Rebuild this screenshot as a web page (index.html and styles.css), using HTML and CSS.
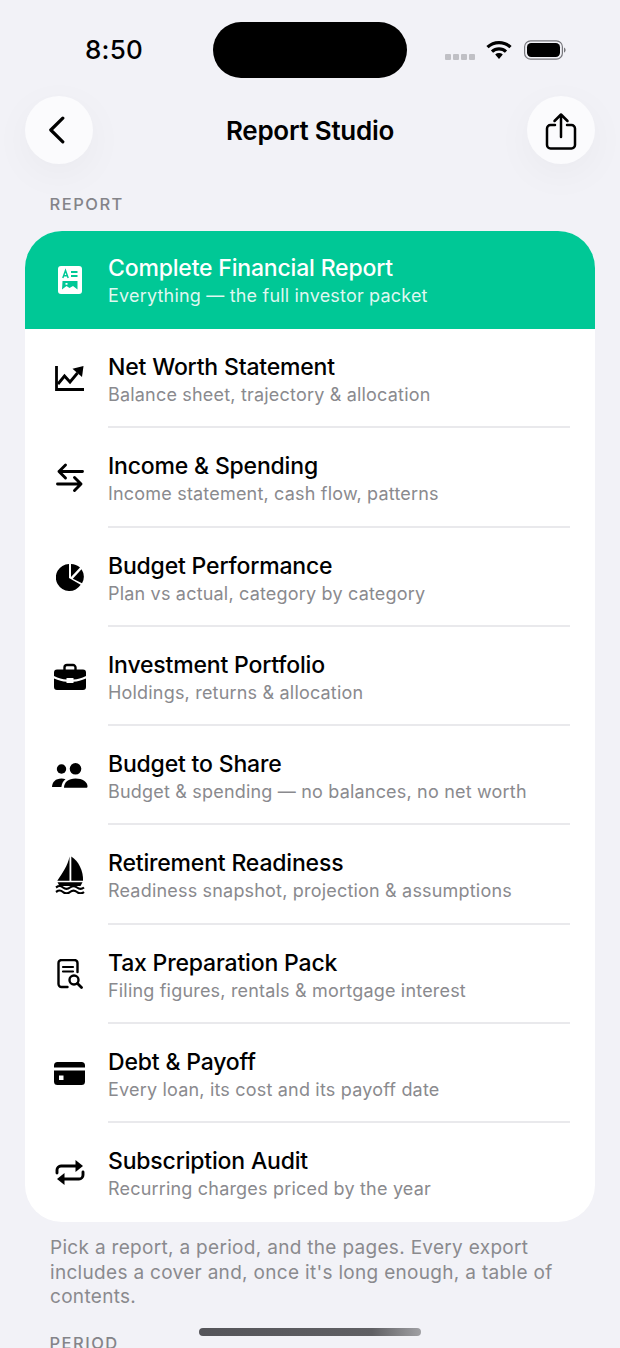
FILE: index.html
```html
<!DOCTYPE html>
<html lang="en">
<head>
<meta charset="utf-8">
<title>Report Studio</title>
<link rel="stylesheet" href="styles.css">
</head>
<body>
<div class="screen">
  <div class="island"></div>
  <div class="status">
    <span class="time">8:50</span>
    <div class="status-icons">
      <span class="signal"><i></i><i></i><i></i><i></i></span>
      <svg class="wifi" width="26" height="20" viewBox="0 0 26 20"><path d="M1.500 7.200A16.500 16.500 0 0 1 24.500 7.200" fill="none" stroke="#000" stroke-width="3.200"/><path d="M6 11.600A10.200 10.200 0 0 1 20 11.600" fill="none" stroke="#000" stroke-width="3.200"/><path d="M9.200 14.600a5.600 5.600 0 0 1 7.600 0L13 19z" fill="#000"/></svg>
      <svg class="battery" width="42" height="20" viewBox="0 0 42 20"><rect x="0.600" y="0.800" width="37.800" height="18.400" rx="6" fill="none" stroke="#77777c" stroke-width="1.200"/><rect x="3" y="3" width="33" height="14" rx="4.200" fill="#000"/><path d="M40 7.400c1 .4 1.600 1.400 1.600 2.600s-.6 2.200-1.600 2.600z" fill="#77777c"/></svg>
    </div>
  </div>
  <header class="nav">
    <button class="round-btn" aria-label="Back">
      <svg class="back-icon" width="17" height="28" viewBox="0 0 17 28"><path d="M14.800 2.200 2.800 14l12 11.800" fill="none" stroke="#000" stroke-width="3.200" stroke-linecap="round" stroke-linejoin="round"/></svg>
    </button>
    <h1 class="nav-title">Report Studio</h1>
    <button class="round-btn" aria-label="Share">
      <svg class="share-icon" width="32" height="40" viewBox="0 0 32 40"><path d="M10 13H5.500A3.500 3.500 0 0 0 2 16.500V33a3.500 3.500 0 0 0 3.500 3.500h21A3.500 3.500 0 0 0 30 33V16.500A3.500 3.500 0 0 0 26.500 13H22" fill="none" stroke="#000" stroke-width="2.500" stroke-linecap="round"/><path d="M16 25V3M9.500 9 16 2.500 22.500 9" fill="none" stroke="#000" stroke-width="2.500" stroke-linecap="round" stroke-linejoin="round"/></svg>
    </button>
  </header>

  <div class="section-label">REPORT</div>

  <section class="card">
    <div class="row row-hero">
      <div class="row-icon">
        <svg width="24" height="28" viewBox="0 0 24 28"><path fill="#fff" d="M3 0h18a3 3 0 0 1 3 3v22a3 3 0 0 1-3 3H3a3 3 0 0 1-3-3V3a3 3 0 0 1 3-3z"/><path d="M4.800 12 7.500 4.500 10.200 12M5.700 9.700h3.600" fill="none" stroke="#00c896" stroke-width="1.500"/><path d="M13 6h6.500M13 10h6.500" stroke="#00c896" stroke-width="1.800"/><path fill="#00c896" d="M4.500 15h15v8.500l-4.500-3.500-3.500 2-3-2-4.500 3.500zM7.500 17v1.800h2V17z"/></svg>
      </div>
      <div class="row-body">
        <div class="row-title">Complete Financial Report</div>
        <div class="row-sub">Everything — the full investor packet</div>
      </div>
    </div>

    <div class="row">
      <div class="row-icon">
        <svg width="30" height="25" viewBox="0 0 30 25"><path d="M1.500 0v23.500H29" fill="none" stroke="#000" stroke-width="2.800"/><path d="M3 18l6.500-8 5.500 6 7.500-9" fill="none" stroke="#000" stroke-width="2.800"/><path d="M17.500 2.800 28.500 0 27 11z" fill="#000"/></svg>
      </div>
      <div class="row-body">
        <div class="row-title">Net Worth Statement</div>
        <div class="row-sub">Balance sheet, trajectory &amp; allocation</div>
      </div>
    </div>

    <div class="row">
      <div class="row-icon">
        <svg width="28" height="31" viewBox="0 0 28 31"><path d="M3 9.500H26.500M9.500 3 3 9.500 9.500 16" fill="none" stroke="#000" stroke-width="2.900" stroke-linecap="round" stroke-linejoin="round"/><path d="M25 22H1.500M18.500 15.500 25 22l-6.500 6.500" fill="none" stroke="#000" stroke-width="2.900" stroke-linecap="round" stroke-linejoin="round"/></svg>
      </div>
      <div class="row-body">
        <div class="row-title">Income &amp; Spending</div>
        <div class="row-sub">Income statement, cash flow, patterns</div>
      </div>
    </div>

    <div class="row">
      <div class="row-icon">
        <svg width="28" height="28" viewBox="0 0 28 28"><path d="M13 1A13.500 13.500 0 1 0 24.700 21.800L13 15z" fill="#000"/><path d="M15 1v13L24 4.500A13.500 13.500 0 0 0 15 1z" fill="#000"/><path d="M16.800 15.800 25.500 6.300A13.500 13.500 0 0 1 26 20.300z" fill="#000"/></svg>
      </div>
      <div class="row-body">
        <div class="row-title">Budget Performance</div>
        <div class="row-sub">Plan vs actual, category by category</div>
      </div>
    </div>

    <div class="row">
      <div class="row-icon">
        <svg width="32" height="27" viewBox="0 0 32 27"><path d="M10.500 7V4.500A2.500 2.500 0 0 1 13 2h6a2.500 2.500 0 0 1 2.500 2.500V7" fill="none" stroke="#000" stroke-width="2.400"/><path d="M3 6.500h26a3 3 0 0 1 3 3V13c-4.500 2.300-8.500 3.200-12.500 3.500V15h-7v1.500C8.500 16.200 4.500 15.300 0 13V9.500a3 3 0 0 1 3-3z" fill="#000"/><path d="M0 15.500c4.500 2 8.500 3 12.500 3.300V20h7v-1.200c4-.3 8-1.300 12.500-3.300V24a3 3 0 0 1-3 3H3a3 3 0 0 1-3-3z" fill="#000"/></svg>
      </div>
      <div class="row-body">
        <div class="row-title">Investment Portfolio</div>
        <div class="row-sub">Holdings, returns &amp; allocation</div>
      </div>
    </div>

    <div class="row">
      <div class="row-icon">
        <svg width="36" height="25" viewBox="0 0 36 25"><circle cx="9.500" cy="6" r="4.700" fill="#000"/><circle cx="23.500" cy="5.800" r="5.800" fill="#000"/><path d="M0 24c.3-5 3.500-8.500 9.500-8.500 1.500 0 2.800.2 4 .7-2.400 1.800-3.700 4.600-4.100 7.800z" fill="#000"/><path d="M12 24.800c0-5.800 4.500-9.300 11.500-9.300S35.500 19 35.500 23.300c0 1-.5 1.500-1.500 1.500z" fill="#000"/></svg>
      </div>
      <div class="row-body">
        <div class="row-title">Budget to Share</div>
        <div class="row-sub">Budget &amp; spending — no balances, no net worth</div>
      </div>
    </div>

    <div class="row">
      <div class="row-icon">
        <svg width="30" height="38" viewBox="0 0 30 38"><path d="M14.500 .5C13 9 7 18 2.300 24.700H14.500z" fill="#000"/><path d="M16.300 .5C23.500 5 28.500 15 28 24.700H16.300z" fill="#000"/><path d="M2.500 26.300h25l-2 3.700h-21z" fill="#000"/><path d="M1 31.500c3-2 4.500-2 7 0s4.500 2 7 0 4.500-2 7 0 4.500 2 7 0" fill="none" stroke="#000" stroke-width="2.200"/><path d="M1 36c3-2 4.500-2 7 0s4.500 2 7 0 4.500-2 7 0 4.500 2 7 0" fill="none" stroke="#000" stroke-width="2.200"/></svg>
      </div>
      <div class="row-body">
        <div class="row-title">Retirement Readiness</div>
        <div class="row-sub">Readiness snapshot, projection &amp; assumptions</div>
      </div>
    </div>

    <div class="row">
      <div class="row-icon">
        <svg width="26" height="30" viewBox="0 0 26 30"><path d="M10.500 28H4.500a3 3 0 0 1-3-3V4a3 3 0 0 1 3-3h13a3 3 0 0 1 3 3v9" fill="none" stroke="#000" stroke-width="2.400" stroke-linecap="round"/><path d="M6 8h10M6 12.500h10" stroke="#000" stroke-width="2.200" stroke-linecap="round"/><circle cx="17" cy="21" r="4.500" fill="none" stroke="#000" stroke-width="2.400"/><path d="m20.500 24.500 4 4" stroke="#000" stroke-width="2.800" stroke-linecap="round"/></svg>
      </div>
      <div class="row-body">
        <div class="row-title">Tax Preparation Pack</div>
        <div class="row-sub">Filing figures, rentals &amp; mortgage interest</div>
      </div>
    </div>

    <div class="row">
      <div class="row-icon">
        <svg width="31" height="23" viewBox="0 0 31 23"><path d="M3.500 0h24A3.500 3.500 0 0 1 31 3.500V5.500H0V3.500A3.500 3.500 0 0 1 3.500 0z" fill="#000"/><path fill-rule="evenodd" d="M0 8.500h31V19.500A3.500 3.500 0 0 1 27.500 23h-24A3.500 3.500 0 0 1 0 19.500zM5 13.500v4.500h4.500v-4.500z" fill="#000"/></svg>
      </div>
      <div class="row-body">
        <div class="row-title">Debt &amp; Payoff</div>
        <div class="row-sub">Every loan, its cost and its payoff date</div>
      </div>
    </div>

    <div class="row">
      <div class="row-icon">
        <svg width="30" height="25" viewBox="0 0 30 25"><path d="M2 13v-3A4 4 0 0 1 6 6h18" fill="none" stroke="#000" stroke-width="2.900" stroke-linecap="round"/><path d="M20.500 0l7.500 6-7.500 6z" fill="#000"/><path d="M28 12v3a4 4 0 0 1-4 4H7" fill="none" stroke="#000" stroke-width="2.900" stroke-linecap="round"/><path d="M9.500 13 2 19l7.500 6z" fill="#000"/></svg>
      </div>
      <div class="row-body">
        <div class="row-title">Subscription Audit</div>
        <div class="row-sub">Recurring charges priced by the year</div>
      </div>
    </div>
  </section>

  <p class="footnote">Pick a report, a period, and the pages. Every export includes a cover and, once it's long enough, a table of contents.</p>

  <div class="section-label section-period">PERIOD</div>
  <div class="home-bar"></div>
</div>
</body>
</html>
```

FILE: styles.css
```css
* { box-sizing: border-box; }
html, body { margin: 0; padding: 0; }
body {
  background: #f2f2f7;
  font-family: Inter, "Liberation Sans", sans-serif;
  color: #000;
}
.screen {
  position: relative;
  width: 620px;
  height: 1348px;
  overflow: hidden;
  background: #f2f2f7;
}
.island {
  position: absolute;
  left: 213px;
  top: 22px;
  width: 194px;
  height: 56px;
  border-radius: 28px;
  background: #000;
}
.status {
  height: 96px;
  padding: 34px 54px 0 85px;
  display: flex;
  justify-content: space-between;
  align-items: flex-start;
}
.time {
  font-size: 26px;
  line-height: 32px;
  font-weight: 500;
  letter-spacing: 0.2px;
}
.status-icons {
  display: flex;
  align-items: center;
  gap: 11px;
  height: 32px;
}
.battery { margin-left: 1px; }
.signal { display: flex; gap: 2px; margin-top: 14px; }
.signal i {
  width: 6px;
  height: 6px;
  border-radius: 1px;
  background: #c0c0c5;
}
.nav {
  height: 68px;
  padding: 0 25px;
  display: flex;
  align-items: center;
  justify-content: space-between;
}
.round-btn {
  width: 68px;
  height: 68px;
  border: 0;
  padding: 0;
  border-radius: 50%;
  background: #fbfbfd;
  box-shadow: 0 10px 40px rgba(0, 0, 0, 0.04);
  display: flex;
  align-items: center;
  justify-content: center;
}
.back-icon { margin-right: 6px; }
.share-icon { margin-top: 3px; }
.nav-title {
  margin: 0;
  padding-top: 2px;
  font-size: 26px;
  line-height: 32px;
  font-weight: 600;
  letter-spacing: -0.25px;
}
.section-label {
  margin: 30px 0 0 49.500px;
  font-size: 16.500px;
  line-height: 20px;
  font-weight: 500;
  letter-spacing: 1.500px;
  color: #848489;
}
.card {
  margin: 17px 25px 0;
  background: #fff;
  border-radius: 37px;
  overflow: hidden;
}
.row {
  height: 99.250px;
  display: flex;
  align-items: stretch;
}
.row-icon {
  width: 83px;
  flex: none;
  display: flex;
  align-items: center;
  justify-content: center;
  padding-left: 6px;
}
.row-body {
  flex: 1;
  margin-right: 25px;
  padding-top: 24px;
  border-bottom: 2px solid #e9e9ec;
}
.row:last-child .row-body { border-bottom: 0; }
.row-title {
  font-size: 23px;
  line-height: 29px;
  font-weight: 500;
  letter-spacing: -0.18px;
}
.row-sub {
  margin-top: 1px;
  font-size: 18px;
  line-height: 24px;
  letter-spacing: 0.19px;
  color: #8a8a8e;
}
.row-hero { background: #00c896; color: #fff; height: 98px; }
.row-hero .row-body { border-bottom: 0; padding-top: 23px; }
.row-hero .row-sub { color: rgba(255, 255, 255, 0.88); }
.footnote {
  margin: 14px 50px 0;
  font-size: 19px;
  line-height: 24.500px;
  letter-spacing: 0.31px;
  color: #8a8a8e;
}
.section-period { margin-top: 23px; }
.home-bar {
  position: absolute;
  left: 199px;
  top: 1328px;
  width: 222px;
  height: 8px;
  border-radius: 4px;
  background: linear-gradient(90deg, #55555a 0%, #606064 78%, #a0a0a4 100%);
}
```
